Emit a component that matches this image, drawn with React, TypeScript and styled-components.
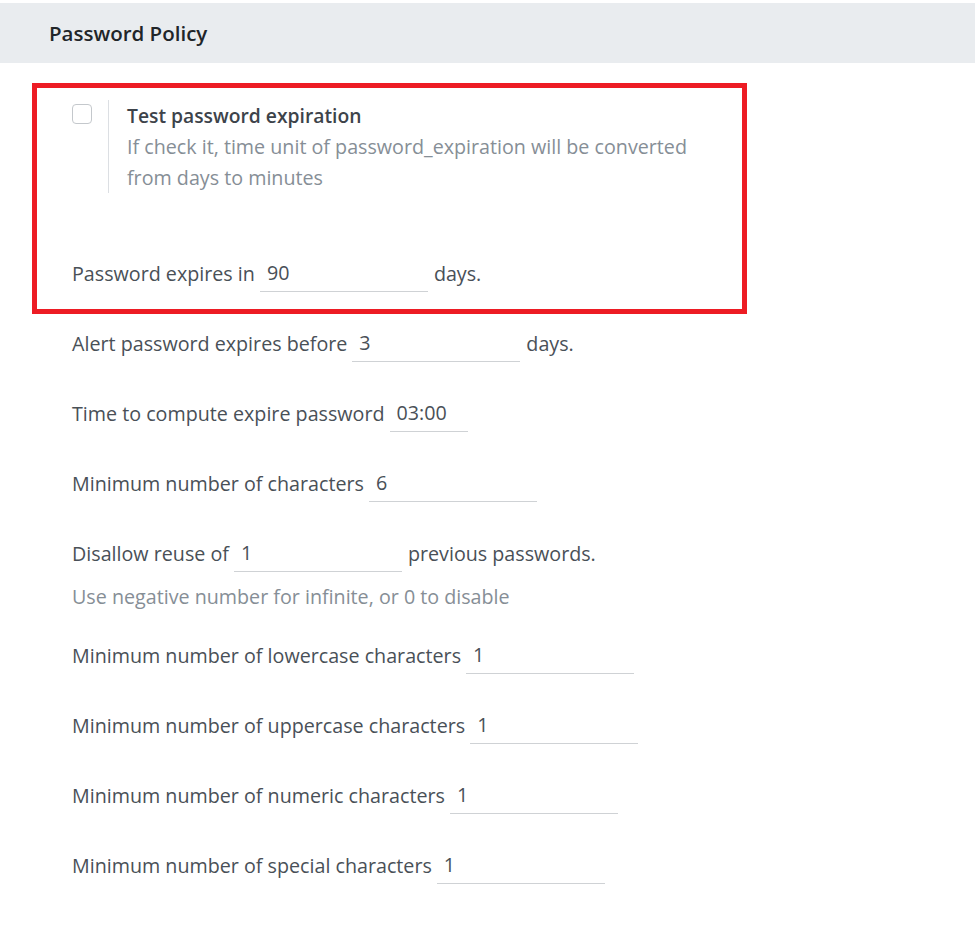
import React from "react";
import styled, { createGlobalStyle } from "styled-components";

const GlobalStyle = createGlobalStyle`
  body {
    margin: 0;
    background: #ffffff;
    font-family: "Open Sans", "Noto Sans", sans-serif;
    color: #495057;
  }
`;

const Page = styled.div`
  padding-top: 3px;
  padding-bottom: 40px;
`;

const Header = styled.div`
  height: 60px;
  display: flex;
  align-items: center;
  padding: 0 49px;
  background: #e9ecef;
  font-size: 20.5px;
  font-weight: 600;
  color: #212529;
`;

const Body = styled.div`
  padding: 20px 0 0 32px;
`;

const Highlight = styled.div`
  width: 670px;
  border: 5px solid #ed1c24;
  padding: 12px 0 17px 35px;
`;

const CheckGroup = styled.div`
  display: flex;
  align-items: flex-start;
  margin-bottom: 61px;
`;

const Box = styled.span`
  flex: none;
  width: 18px;
  height: 18px;
  margin-top: 4px;
  border: 1px solid #c4c8cc;
  border-radius: 4px;
  background: #fff;
`;

const CheckText = styled.div`
  margin-left: 16px;
  padding-left: 18px;
  border-left: 1px solid #dcdfe3;
  width: 590px;
  font-size: 19.7px;
  line-height: 31px;
`;

const CheckTitle = styled.div`
  font-weight: 600;
  font-size: 19.3px;
  color: #3d434a;
`;

const CheckDesc = styled.div`
  color: #868e96;
`;

const Fields = styled.div`
  padding: 10px 0 0 40px;
`;

const Row = styled.div<{ $gap?: number }>`
  display: flex;
  align-items: center;
  height: 38px;
  font-size: 19.7px;
  margin-bottom: ${(p) => (p.$gap ?? 32)}px;
`;

const Input = styled.input<{ $w?: number }>`
  box-sizing: border-box;
  width: ${(p) => p.$w ?? 168}px;
  height: 38px;
  margin: 0 6px 0 5px;
  padding: 0 7px;
  border: none;
  border-bottom: 1px solid #cfd2d5;
  outline: none;
  font: inherit;
  color: #495057;
  background: transparent;
`;

const Hint = styled.div`
  font-size: 19.7px;
  line-height: 24px;
  color: #868e96;
  margin: -19px 0 27px;
`;

type Field = { label: string; value: string; suffix?: string; width?: number };

const fields: Field[] = [
  { label: "Alert password expires before", value: "3", suffix: "days." },
  { label: "Time to compute expire password", value: "03:00", width: 78 },
  { label: "Minimum number of characters", value: "6" },
  { label: "Disallow reuse of", value: "1", suffix: "previous passwords." },
  { label: "Minimum number of lowercase characters", value: "1" },
  { label: "Minimum number of uppercase characters", value: "1" },
  { label: "Minimum number of numeric characters", value: "1" },
  { label: "Minimum number of special characters", value: "1" },
];

const FieldRow: React.FC<{ field: Field }> = ({ field }) => (
  <Row>
    <span>{field.label}</span>
    <Input $w={field.width} defaultValue={field.value} />
    {field.suffix && <span>{field.suffix}</span>}
  </Row>
);

const App: React.FC = () => {
  return (
    <Page>
      <GlobalStyle />
      <Header>Password Policy</Header>
      <Body>
        <Highlight>
          <CheckGroup>
            <Box />
            <CheckText>
              <CheckTitle>Test password expiration</CheckTitle>
              <CheckDesc>
                If check it, time unit of password_expiration will be converted
                from days to minutes
              </CheckDesc>
            </CheckText>
          </CheckGroup>
          <Row $gap={0}>
            <span>Password expires in</span>
            <Input defaultValue="90" />
            <span>days.</span>
          </Row>
        </Highlight>
        <Fields>
          {fields.map((f) => (
            <React.Fragment key={f.label}>
              <FieldRow field={f} />
              {f.label === "Disallow reuse of" && (
                <Hint>Use negative number for infinite, or 0 to disable</Hint>
              )}
            </React.Fragment>
          ))}
        </Fields>
      </Body>
    </Page>
  );
};

export default App;
